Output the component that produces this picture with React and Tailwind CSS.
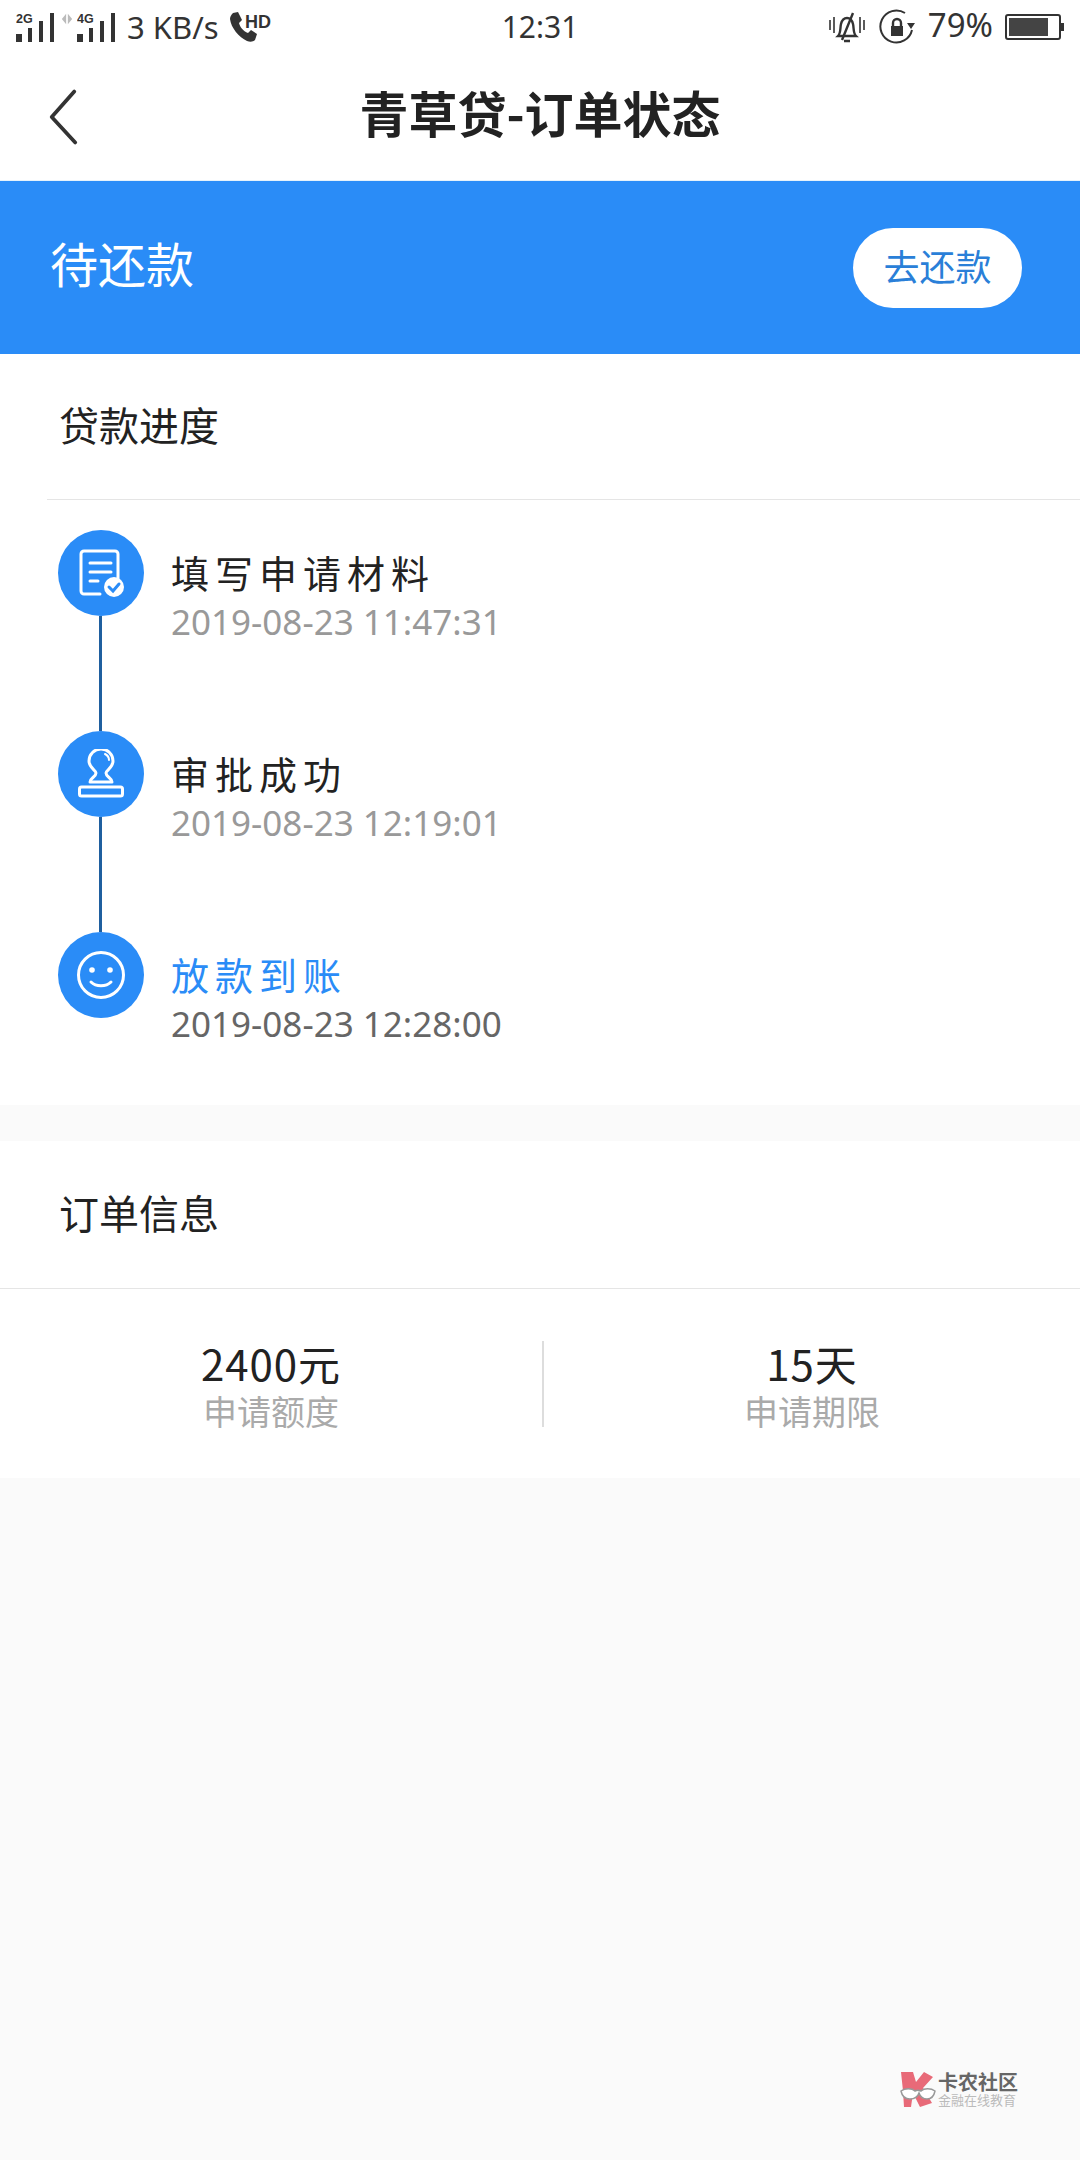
import { Fragment } from "react";

const CJK = "font-['Noto_Sans_CJK_SC','Noto_Sans',sans-serif]";

const Signal = ({ label }) => (
  <svg width="38" height="29" viewBox="0 0 38 29" className="block">
    <text x="0" y="10" fontSize="12.5" fontWeight="700" fill="#333" fontFamily="Liberation Sans">{label}</text>
    <rect x="0" y="21" width="6" height="8" fill="#333" />
    <rect x="12" y="15" width="4" height="14" fill="#333" />
    <rect x="23" y="8" width="4" height="21" fill="#333" />
    <rect x="34" y="0" width="4" height="29" fill="#333" />
  </svg>
);

const Phone = () => (
  <svg width="42" height="30" viewBox="0 0 42 30" className="block">
    <path d="M3 1l5-1 4 8-3 3c1 4 4 8 9 10l3-3 6 4-2 6c-2 2-5 2-8 1C9 25 1 16 0 7c0-2 1-4 3-6z" fill="#333" />
    <text x="15" y="16" fontSize="18" fontWeight="700" fill="#333" fontFamily="Liberation Sans">HD</text>
  </svg>
);

const StatusBar = () => (
  <div className="flex h-[52px] items-center px-[16px] pt-[2px] text-[30px] text-[#333] font-['Noto_Sans',sans-serif]">
    <div className="flex flex-1 items-center">
      <Signal label="2G" />
      <svg width="12" height="12" viewBox="0 0 14 14" className="mb-[16px] ml-[7px] mr-[4px] block">
        <path d="M6 1v12L1 7zM8 1v12l5-6z" fill="#bbb" />
      </svg>
      <Signal label="4G" />
      <span className="ml-[12px] text-[31px] leading-none">3 KB/s</span>
      <div className="ml-[11px]"><Phone /></div>
    </div>
    <span className="leading-none">12:31</span>
    <div className="flex flex-1 items-center justify-end">
      <svg width="36" height="32" viewBox="0 0 36 32" className="block" fill="none" stroke="#333" strokeWidth="2.4">
        <path d="M1 9v10M5 6v16M31 6v16M35 9v10" strokeWidth="1.6" />
        <path d="M9 25c3-3 2-8 3-12 1-4 3-6 6-6s5 2 6 6c1 4 0 9 3 12z" />
        <path d="M13 29L24 2M15 30h6" />
      </svg>
      <svg width="36" height="36" viewBox="0 0 36 36" className="ml-[14px] block" fill="none">
        <path d="M33 21A16 16 0 1 1 26 4" stroke="#333" strokeWidth="2" />
        <path d="M28 14h8l-4 6z" fill="#333" />
        <path d="M12 17h12v10H12z" fill="#333" />
        <path d="M14 17v-3a4 4 0 0 1 8 0v3" stroke="#333" strokeWidth="2.4" />
      </svg>
      <span className="ml-[13px] mb-[6px] text-[33px] leading-none">79%</span>
      <div className="ml-[12px] flex items-center">
        <div className="flex h-[26px] w-[56px] items-stretch rounded-[3px] border-2 border-[#333] p-[2px]">
          <div className="w-[39px] bg-[#444]" />
        </div>
        <div className="h-[8px] w-[3px] bg-[#333]" />
      </div>
    </div>
  </div>
);

const NavBar = () => (
  <div className="grid h-[129px] grid-cols-[1fr_auto_1fr] items-center border-b border-[#e6f2fb]">
    <svg width="32" height="60" viewBox="0 0 34 60" className="ml-[47px] mt-[2px] block" fill="none">
      <path d="M29 3L5 30l25 27" stroke="#333" strokeWidth="4" strokeLinecap="round" strokeLinejoin="round" />
    </svg>
    <h1 className={`${CJK} mb-[9px] text-[49px] font-bold leading-none text-[#222]`}>青草贷-订单状态</h1>
    <div />
  </div>
);

const Banner = () => (
  <div className="flex h-[173px] items-center justify-between bg-[#2a8cf7] pl-[50px] pr-[58px]">
    <span className={`${CJK} mb-[12px] text-[48px] leading-none text-white`}>待还款</span>
    <button className={`${CJK} h-[80px] w-[169px] rounded-[40px] bg-white pb-[6px] text-[36px] text-[#2a7fd8]`}>去还款</button>
  </div>
);

const steps = [
  { id: 1, title: "填写申请材料", time: "2019-08-23 11:47:31", icon: "doc" },
  { id: 2, title: "审批成功", time: "2019-08-23 12:19:01", icon: "stamp" },
  { id: 3, title: "放款到账", time: "2019-08-23 12:28:00", icon: "smile", active: true },
];

const StepIcon = ({ type }) => {
  if (type === "doc") {
    return (
      <svg width="46" height="50" viewBox="0 0 46 50" fill="none" stroke="#fff" strokeWidth="3" strokeLinecap="round">
        <path d="M22 46H6a3 3 0 0 1-3-3V6a3 3 0 0 1 3-3h31a3 3 0 0 1 3 3v25" />
        <path d="M12 15h21M12 24h21M12 33h8" />
        <circle cx="36" cy="39" r="10" fill="#fff" stroke="none" />
        <path d="M31 39l4 4 6-7" stroke="#2a8cf7" />
      </svg>
    );
  }
  if (type === "stamp") {
    return (
      <svg width="46" height="50" viewBox="0 0 46 50" fill="none" stroke="#fff" strokeWidth="3" strokeLinecap="round" strokeLinejoin="round">
        <path d="M12 33c0-4 6-5 6-9 0-3-7-5-7-12a12 12 0 0 1 24 0c0 7-7 9-7 12 0 4 6 5 6 9z" />
        <path d="M27 5c2 1 4 3 4 6" strokeWidth="2" />
        <rect x="1.5" y="38" width="43" height="9" rx="2" />
      </svg>
    );
  }
  return (
    <svg width="50" height="50" viewBox="0 0 50 50" fill="none" stroke="#fff" strokeWidth="3" strokeLinecap="round">
      <circle cx="25" cy="25" r="22.5" />
      <circle cx="16" cy="20" r="2.8" fill="#fff" stroke="none" />
      <circle cx="34" cy="20" r="2.8" fill="#fff" stroke="none" />
      <path d="M15 32c5 5 15 5 20 0" />
    </svg>
  );
};

const Timeline = () => (
  <div className="px-[58px] pt-[30px]">
    {steps.map((step, i) => (
      <Fragment key={step.id}>
        <div className="flex h-[86px] items-start">
          <div className="flex h-[86px] w-[86px] shrink-0 items-center justify-center rounded-full bg-[#2a8cf7]">
            <StepIcon type={step.icon} />
          </div>
          <div className="ml-[27px] pt-[19px]">
            <div className={`${CJK} text-[38px] leading-[46px] tracking-[6px] ${step.active ? "text-[#2a8cf7]" : "text-[#222]"}`}>{step.title}</div>
            <div className={`mt-[5px] font-['Noto_Sans',sans-serif] text-[35px] leading-[44px] ${step.active ? "text-[#666]" : "text-[#999]"}`}>{step.time}</div>
          </div>
        </div>
        {i < steps.length - 1 && <div className="ml-[41px] h-[115px] w-[3px] bg-[#1f5f9f]" />}
      </Fragment>
    ))}
  </div>
);

const Stat = ({ value, label }) => (
  <div className="flex flex-col items-center pt-[6px]">
    <div className={`${CJK} text-[42px] leading-[49px] tracking-[1px] text-[#222]`}>{value}</div>
    <div className={`${CJK} text-[34px] leading-[48px] text-[#aaa]`}>{label}</div>
  </div>
);

export default function App() {
  return (
    <div className="flex h-[2160px] w-[1080px] flex-col bg-[#fafafa]">
      <div className="bg-white">
        <StatusBar />
        <NavBar />
      </div>
      <Banner />

      <section className="h-[751px] bg-white">
        <div className="ml-[47px] flex h-[146px] items-center border-b border-[#e5e5e5] pb-[6px] pl-[12px]">
          <h2 className={`${CJK} text-[40px] leading-none text-[#222]`}>贷款进度</h2>
        </div>
        <Timeline />
      </section>

      <section className="mt-[36px] bg-white">
        <div className="flex h-[148px] items-center border-b border-[#e5e5e5] pb-[6px] pl-[59px]">
          <h2 className={`${CJK} text-[40px] leading-none text-[#222]`}>订单信息</h2>
        </div>
        <div className="grid h-[189px] grid-cols-[542px_2px_1fr] items-center">
          <Stat value="2400元" label="申请额度" />
          <div className="h-[86px] bg-[#ddd]" />
          <Stat value="15天" label="申请期限" />
        </div>
      </section>

      <div className="flex flex-1 items-end justify-end pb-[52px] pr-[62px]">
        <div className="flex items-center">
          <svg width="36" height="38" viewBox="0 0 36 38" className="block">
            <path d="M1 2h12l3 10 8-10 9 5-10 11 9 15-12 4-7-14-2 14-7 0-1-16z" fill="#e86a78" />
            <path d="M1 21c4-3 11-3 14 0 2-1 4-1 6 0 3-3 10-3 14 0-1 5-3 8-8 8-5 0-7-3-8-6-1 3-4 6-9 6s-8-3-9-8z" fill="#fff" stroke="#999" strokeWidth="1.5" />
          </svg>
          <div className="ml-[2px] flex flex-col">
            <span className={`${CJK} text-[20px] font-bold leading-[22px] text-[#666]`}>卡农社区</span>
            <span className={`${CJK} text-[13px] leading-[14px] text-[#bbb]`}>金融在线教育</span>
          </div>
        </div>
      </div>
    </div>
  );
}
